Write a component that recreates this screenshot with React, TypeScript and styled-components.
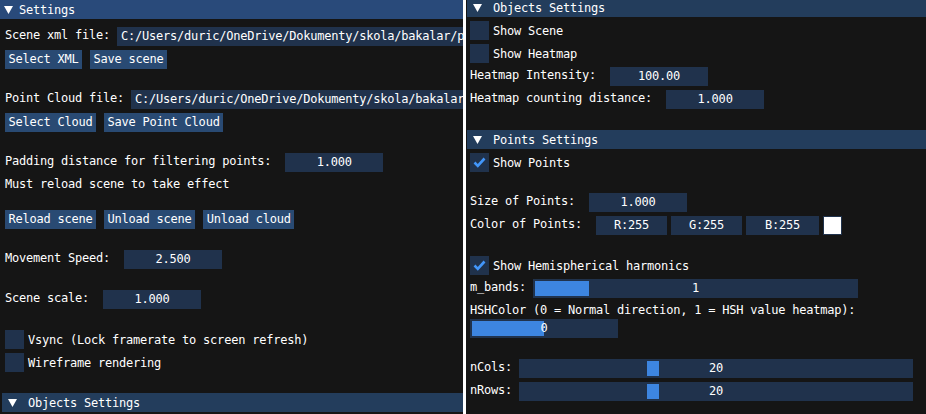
import React from "react";
import styled, { createGlobalStyle } from "styled-components";

const GlobalStyle = createGlobalStyle`
  html, body {
    margin: 0;
    padding: 0;
    background: #ffffff;
  }
  body {
    font-family: "DejaVu Sans Mono", "Liberation Mono", monospace;
    font-size: 12px;
    letter-spacing: -0.22px;
    color: #ffffff;
  }
  * {
    box-sizing: border-box;
  }
`;

const Screen = styled.div`
  display: flex;
  width: 926px;
  height: 414px;
  gap: 3px;
  overflow: hidden;
`;

const Window = styled.div<{ $width?: number }>`
  ${(p) => (p.$width ? `width: ${p.$width}px;` : "flex: 1;")}
  height: 100%;
  background: #151515;
  display: flex;
  flex-direction: column;
  overflow: hidden;
`;

const TitleBar = styled.div`
  height: 19px;
  flex-shrink: 0;
  background: #294a7a;
  display: flex;
  align-items: center;
  padding-left: 4px;
  gap: 6px;
`;

const Body = styled.div<{ $padLeft: number; $padTop: number }>`
  display: flex;
  flex-direction: column;
  gap: 4px;
  padding: ${(p) => p.$padTop}px 0 0 ${(p) => p.$padLeft}px;
  min-width: 0;
`;

const Header = styled.div<{ $shiftTop?: number }>`
  height: 19px;
  flex-shrink: 0;
  margin-left: -3px;
  ${(p) => (p.$shiftTop ? `margin-top: -${p.$shiftTop}px;` : "")}
  background: #233d5c;
  display: flex;
  align-items: center;
  padding-left: 6px;
  gap: 11px;
`;

const Row = styled.div<{ $gap?: number }>`
  display: flex;
  align-items: flex-start;
  gap: ${(p) => p.$gap ?? 7}px;
  height: 19px;
  flex-shrink: 0;
  min-width: 0;
`;

const Label = styled.span<{ $extra?: number }>`
  line-height: 13px;
  padding-top: 2px;
  white-space: pre;
  flex-shrink: 0;
  ${(p) => (p.$extra ? `margin-right: ${p.$extra}px;` : "")}
`;

const TextLine = styled.div`
  height: 13px;
  line-height: 13px;
  padding-top: 2px;
  white-space: pre;
  flex-shrink: 0;
`;

const Spacer = styled.div`
  height: 13px;
  flex-shrink: 0;
`;

const Frame = styled.div<{ $width?: number; $align?: "left" | "center" }>`
  ${(p) => (p.$width ? `width: ${p.$width}px; flex-shrink: 0;` : "flex: 1; min-width: 0;")}
  height: 19px;
  line-height: 19px;
  background: #20324c;
  padding: 0 4px;
  text-align: ${(p) => p.$align ?? "center"};
  white-space: nowrap;
  overflow: hidden;
`;

const Button = styled.div`
  height: 19px;
  line-height: 19px;
  padding: 0 3.5px;
  background: #294a73;
  white-space: pre;
`;

const CheckBox = styled.div`
  width: 19px;
  height: 19px;
  background: #20324c;
  flex-shrink: 0;
`;

const CheckRow = styled.div`
  display: flex;
  align-items: center;
  gap: 4px;
  height: 19px;
  flex-shrink: 0;
`;

const Swatch = styled.div`
  width: 19px;
  height: 19px;
  background: #ffffff;
  border: 1px solid #20324c;
  flex-shrink: 0;
`;

const SliderFrame = styled.div<{ $width?: number }>`
  position: relative;
  ${(p) => (p.$width ? `width: ${p.$width}px; flex-shrink: 0;` : "flex: 1; min-width: 0;")}
  height: 19px;
  line-height: 19px;
  background: #20324c;
  text-align: center;
`;

const Grab = styled.div`
  position: absolute;
  top: 2px;
  bottom: 2px;
  background: #3d85e0;
`;

const SliderValue = styled.span`
  position: relative;
`;

function Arrow() {
  return (
    <svg width="9" height="8" viewBox="0 0 9 8">
      <polygon points="0,0 9,0 4.5,8" fill="#ffffff" />
    </svg>
  );
}

function Check({ label, checked }: { label: string; checked?: boolean }) {
  return (
    <CheckRow>
      <CheckBox>
        {checked && (
          <svg width="19" height="19" viewBox="0 0 19 19">
            <polyline
              points="4.5,9.5 7.8,12.8 14.5,5.5"
              fill="none"
              stroke="#4296fa"
              strokeWidth="2.6"
            />
          </svg>
        )}
      </CheckBox>
      <span>{label}</span>
    </CheckRow>
  );
}

type SliderProps = {
  value: number;
  min: number;
  max: number;
  width: number;
};

function Slider({ value, min, max, width }: SliderProps) {
  const inner = width - 4;
  const grab = Math.max(inner / (max - min + 1), 10);
  const left = 2 + ((value - min) / (max - min)) * (inner - grab);
  return (
    <SliderFrame $width={width}>
      <Grab style={{ left, width: grab }} />
      <SliderValue>{value}</SliderValue>
    </SliderFrame>
  );
}

export default function App() {
  return (
    <>
      <GlobalStyle />
      <Screen>
        <Window $width={463}>
          <TitleBar>
            <Arrow />
            <span>Settings</span>
          </TitleBar>
          <Body $padLeft={5} $padTop={8}>
            <Row>
              <Label>Scene xml file:</Label>
              <Frame $align="left">C:/Users/duric/OneDrive/Dokumenty/skola/bakalar/pr</Frame>
            </Row>
            <Row $gap={8}>
              <Button>Select XML</Button>
              <Button>Save scene</Button>
            </Row>
            <Spacer />
            <Row>
              <Label>Point Cloud file:</Label>
              <Frame $align="left">C:/Users/duric/OneDrive/Dokumenty/skola/bakalar/</Frame>
            </Row>
            <Row $gap={8}>
              <Button>Select Cloud</Button>
              <Button>Save Point Cloud</Button>
            </Row>
            <Spacer />
            <Row>
              <Label>Padding distance for filtering points: </Label>
              <Frame $width={98}>1.000</Frame>
            </Row>
            <TextLine>Must reload scene to take effect</TextLine>
            <Spacer />
            <Row $gap={8}>
              <Button>Reload scene</Button>
              <Button>Unload scene</Button>
              <Button>Unload cloud</Button>
            </Row>
            <Spacer />
            <Row>
              <Label>Movement Speed: </Label>
              <Frame $width={98}>2.500</Frame>
            </Row>
            <Spacer />
            <Row>
              <Label>Scene scale: </Label>
              <Frame $width={98}>1.000</Frame>
            </Row>
            <Spacer />
            <Check label="Vsync (Lock framerate to screen refresh)" />
            <Check label="Wireframe rendering" />
            <Spacer />
            <Header>
              <Arrow />
              <span>Objects Settings</span>
            </Header>
          </Body>
        </Window>

        <Window>
          <Body $padLeft={4} $padTop={0}>
            <Header $shiftTop={2}>
              <Arrow />
              <span>Objects Settings</span>
            </Header>
            <Check label="Show Scene" />
            <Check label="Show Heatmap" />
            <Row>
              <Label>Heatmap Intensity: </Label>
              <Frame $width={98}>100.00</Frame>
            </Row>
            <Row>
              <Label>Heatmap counting distance: </Label>
              <Frame $width={98}>1.000</Frame>
            </Row>
            <Spacer />
            <Header>
              <Arrow />
              <span>Points Settings</span>
            </Header>
            <Check label="Show Points" checked />
            <Spacer />
            <Row>
              <Label>Size of Points: </Label>
              <Frame $width={98}>1.000</Frame>
            </Row>
            <Row $gap={4}>
              <Label $extra={10}>Color of Points:</Label>
              <Frame $width={71}>R:255</Frame>
              <Frame $width={71}>G:255</Frame>
              <Frame $width={73}>B:255</Frame>
              <Swatch />
            </Row>
            <Spacer />
            <Check label="Show Hemispherical harmonics" checked />
            <Row>
              <Label>m_bands:</Label>
              <Slider value={1} min={1} max={6} width={325} />
            </Row>
            <TextLine>HSHColor (0 = Normal direction, 1 = HSH value heatmap):</TextLine>
            <Row>
              <Slider value={0} min={0} max={1} width={148} />
            </Row>
            <Spacer />
            <Row>
              <Label>nCols:</Label>
              <Slider value={20} min={10} max={40} width={394} />
            </Row>
            <Row>
              <Label>nRows:</Label>
              <Slider value={20} min={10} max={40} width={394} />
            </Row>
          </Body>
        </Window>
      </Screen>
    </>
  );
}
